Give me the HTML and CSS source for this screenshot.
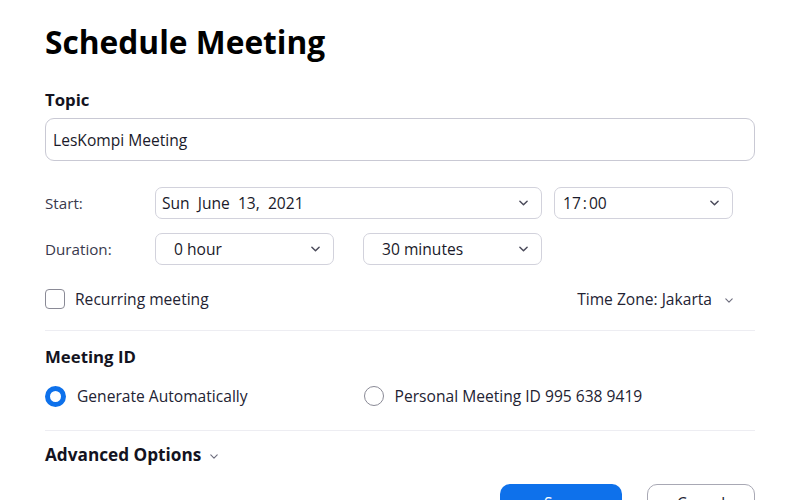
FILE: index.html
```html
<!DOCTYPE html>
<html>
<head>
<meta charset="utf-8">
<link rel="stylesheet" href="styles.css">
</head>
<body>
<div class="page">
  <h1 class="title">Schedule Meeting</h1>
  <div class="section-label">Topic</div>
  <div class="input">LesKompi Meeting</div>

  <div class="row row-start">
    <div class="label">Start:</div>
    <div class="select sel-date"><span class="val">Sun&nbsp;&nbsp;June&nbsp;&nbsp;13,&nbsp;&nbsp;2021</span><svg class="chev" viewBox="0 0 10 6"><path d="M1 1l4 4 4-4"/></svg></div>
    <div class="select sel-time"><span class="val">17<span class="colon">:</span>00</span><svg class="chev" viewBox="0 0 10 6"><path d="M1 1l4 4 4-4"/></svg></div>
  </div>
  <div class="row row-dur">
    <div class="label">Duration:</div>
    <div class="select sel-hour"><span class="val">0 hour</span><svg class="chev" viewBox="0 0 10 6"><path d="M1 1l4 4 4-4"/></svg></div>
    <div class="select sel-min"><span class="val">30 minutes</span><svg class="chev" viewBox="0 0 10 6"><path d="M1 1l4 4 4-4"/></svg></div>
  </div>

  <div class="row row-rec">
    <div class="check"><span class="box"></span><span>Recurring meeting</span></div>
    <div class="tz"><span>Time Zone: Jakarta</span><svg class="chev small" viewBox="0 0 10 6"><path d="M1 1l4 4 4-4"/></svg></div>
  </div>

  <div class="divider"></div>

  <div class="section-label mid">Meeting ID</div>
  <div class="row row-radio">
    <div class="radio-item"><span class="radio on"></span><span>Generate Automatically</span></div>
    <div class="radio-item second"><span class="radio"></span><span>Personal Meeting ID 995 638 9419</span></div>
  </div>

  <div class="divider d2"></div>

  <div class="adv"><span>Advanced Options</span><svg class="chev small" viewBox="0 0 10 6"><path d="M1 1l4 4 4-4"/></svg></div>

  <div class="buttons">
    <div class="btn save">Save</div>
    <div class="btn cancel">Cancel</div>
  </div>
</div>
</body>
</html>
```
FILE: styles.css
```css
html, body {
  margin: 0;
  padding: 0;
  background: #ffffff;
  overflow: hidden;
}
body {
  font-family: "Open Sans", "Noto Sans", sans-serif;
  color: #232333;
  width: 800px;
  height: 500px;
}
.page {
  padding: 20px 45px 0 45px;
  width: 710px;
}
.title {
  margin: 0;
  font-size: 31.7px;
  font-weight: 700;
  line-height: 44px;
  color: #000000;
}
.section-label {
  font-size: 16.8px;
  font-weight: 700;
  color: #131321;
  margin-top: 24px;
  line-height: 24px;
}
.section-label.mid {
  margin-top: 14px;
}
.input {
  margin-top: 6px;
  height: 41px;
  border: 1px solid #c9c9d4;
  border-radius: 9px;
  padding-left: 7px;
  display: flex;
  align-items: center;
  font-size: 15.6px;
  color: #1a1a2a;
}
.row {
  display: flex;
  align-items: center;
}
.row-start {
  margin-top: 26px;
}
.row-dur {
  margin-top: 14px;
}
.label {
  width: 110px;
  font-size: 15.2px;
  color: #39394d;
}
.select {
  height: 30px;
  border: 1px solid #d2d2dc;
  border-radius: 7px;
  display: flex;
  align-items: center;
  justify-content: space-between;
  padding: 0 13px 0 6px;
  font-size: 15.6px;
  color: #1a1a2a;
  box-sizing: content-box;
}
.sel-date { width: 366px; }
.sel-time { width: 156px; margin-left: 12px; padding-left: 8px; }
.sel-hour { width: 146px; padding-left: 18px; }
.sel-min { width: 146px; padding-left: 18px; margin-left: 29px; }
.colon {
  margin: 0 2px;
}
.chev {
  width: 9px;
  height: 6px;
  fill: none;
  stroke: #4a4a5a;
  stroke-width: 1.6;
  stroke-linecap: round;
  stroke-linejoin: round;
}
.chev.small {
  width: 8px;
  height: 5px;
  stroke: #6e6e7e;
  stroke-width: 1.4;
}
.row-rec {
  margin-top: 23px;
  justify-content: space-between;
  font-size: 15.6px;
  color: #232333;
}
.check {
  display: flex;
  align-items: center;
}
.box {
  width: 18px;
  height: 18px;
  border: 1.5px solid #8a8a96;
  border-radius: 4px;
  margin-right: 10px;
}
.tz {
  display: flex;
  align-items: center;
  margin-right: 22px;
}
.tz .chev {
  margin-left: 13px;
  margin-top: 2px;
}
.divider {
  height: 1px;
  background: #ededf2;
  margin-top: 20px;
}
.d2 {
  margin-top: 23px;
}
.row-radio {
  margin-top: 16px;
  font-size: 15.6px;
  color: #232333;
}
.radio-item {
  display: flex;
  align-items: center;
}
.radio-item.second {
  margin-left: 116px;
}
.radio {
  width: 18px;
  height: 18px;
  border: 1.5px solid #8a8a96;
  border-radius: 50%;
  margin-right: 11px;
  box-sizing: content-box;
}
.radio.on {
  width: 11px;
  height: 11px;
  border: 5px solid #0e71eb;
}
.adv {
  margin-top: 12px;
  font-size: 17.2px;
  font-weight: 700;
  color: #131321;
  display: flex;
  align-items: center;
  line-height: 24px;
}
.adv .chev {
  margin-left: 9px;
  margin-top: 3px;
}
.buttons {
  display: flex;
  justify-content: flex-end;
  margin-top: 17px;
}
.btn {
  height: 38px;
  border-radius: 10px;
  display: flex;
  align-items: center;
  justify-content: center;
  font-size: 15.6px;
  box-sizing: border-box;
}
.save {
  width: 122px;
  background: #0e71eb;
  color: #ffffff;
}
.cancel {
  width: 108px;
  margin-left: 25px;
  border: 1px solid #a8a8b4;
  color: #232333;
}
```
